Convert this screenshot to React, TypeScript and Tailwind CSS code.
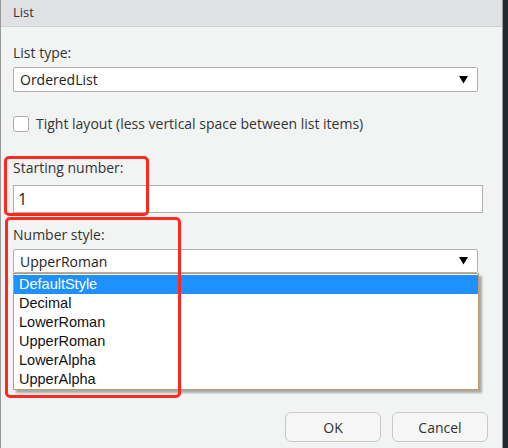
import React from "react";

const items = ["DefaultStyle", "Decimal", "LowerRoman", "UpperRoman", "LowerAlpha", "UpperAlpha"];

function Arrow() {
  return (
    <svg width="9" height="8" viewBox="0 0 9 8" className="block">
      <path d="M0 0 H9 L4.5 7.5 Z" fill="#000" />
    </svg>
  );
}

export default function App() {
  return (
    <div className="w-[508px] h-[448px] flex bg-[#222a31] overflow-hidden" style={{ fontFamily: '"Open Sans", "Noto Sans", sans-serif' }}>
      <div className="w-[503px] h-full flex flex-col bg-[#f2f3f3] border-l border-r border-[#9a9a9a] relative">
        <div className="h-[27px] bg-[#e0e1e4] border-b border-[#d0d1d4] flex items-center pl-[12px] text-[13px] text-[#333]">List</div>
        <div className="flex flex-col pl-[12px] text-[14px] text-[#333]">
          <div className="mt-[16px] h-[20px] leading-[20px]">List type:</div>
          <div className="mt-[4px] w-[465px] h-[25px] bg-white border border-[#b0b0b0] rounded-[2px] flex items-center justify-between pl-[6px] pr-[9px] text-[#222]">
            <span>OrderedList</span>
            <Arrow />
          </div>
          <div className="mt-[23px] flex items-center h-[17px]">
            <div className="w-[16px] h-[16px] bg-white border border-[#aaa] rounded-[3px]"></div>
            <span className="ml-[7px]">Tight layout (less vertical space between list items)</span>
          </div>
          <div className="mt-[26px] h-[20px] leading-[20px]">Starting number:</div>
          <div className="mt-[7px] w-[470px] h-[28px] bg-white border border-[#b0b0b0] flex items-center pl-[4px] text-[16px] text-[#222]">1</div>
          <div className="mt-[12px] h-[20px] leading-[20px]">Number style:</div>
          <div className="mt-[4px] w-[465px] h-[24px] bg-white border border-[#b0b0b0] rounded-[2px] flex items-center justify-between pl-[6px] pr-[9px] text-[#222]">
            <span>UpperRoman</span>
            <Arrow />
          </div>
          <div className="w-[466px] h-[117px] bg-white border border-[#c09a6a] shadow-[3px_3px_2px_rgba(0,0,0,0.3)] pt-[1px]" style={{ fontFamily: '"Liberation Sans", Arial, sans-serif' }}>
            {items.map((it, i) => (
              <div key={it} className={`h-[19px] leading-[19px] pl-[5px] text-[14.5px] ${i === 0 ? "bg-[#1e90ff] text-white" : "text-[#111]"}`}>{it}</div>
            ))}
          </div>
        </div>
        <div className="mt-auto mb-[6px] flex justify-end gap-[11px] pr-[14px]">
          <div className="w-[96px] h-[30px] rounded-[6px] border border-[#c8c8c8] bg-[#f6f6f6] flex items-center justify-center text-[14px] text-[#333]">OK</div>
          <div className="w-[96px] h-[30px] rounded-[6px] border border-[#c8c8c8] bg-[#f6f6f6] flex items-center justify-center text-[14px] text-[#333]">Cancel</div>
        </div>
        <div className="absolute left-[3px] top-[156px] w-[145px] h-[60px] border-[3px] border-[#ff2a1f] rounded-[5px] pointer-events-none"></div>
        <div className="absolute left-[4px] top-[217px] w-[176px] h-[181px] border-[3px] border-[#ff2a1f] rounded-[5px] pointer-events-none"></div>
      </div>
    </div>
  );
}
